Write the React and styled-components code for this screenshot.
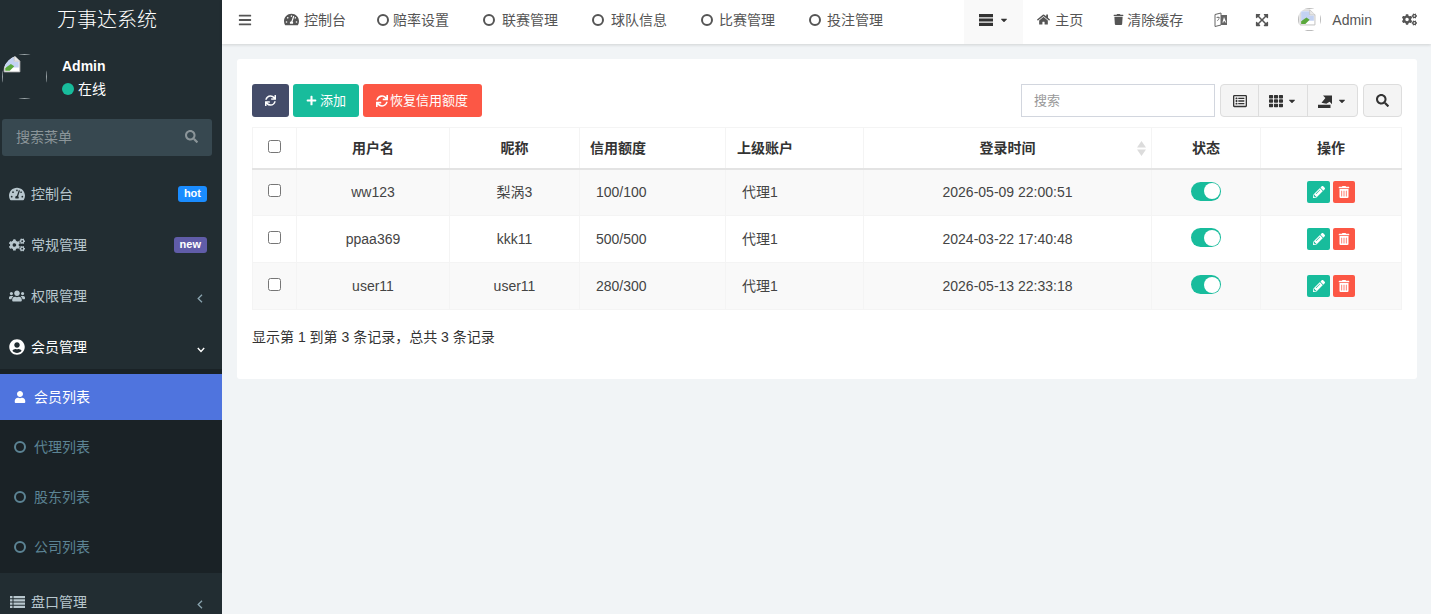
import React from "react";
import styled, { createGlobalStyle } from "styled-components";
import {
  FaTachometerAlt, FaCogs, FaUsers, FaUserCircle, FaUser, FaHome, FaTrash, FaBars,
  FaExpandArrowsAlt, FaSearch, FaSync, FaPlus, FaTh, FaRegListAlt, FaPencilAlt,
  FaCaretDown, FaTrashAlt,
} from "react-icons/fa";

const Global = createGlobalStyle`
  html, body { margin: 0; padding: 0; height: 100%; overflow: hidden; }
  body { font-family: "Liberation Sans", "Noto Sans CJK SC", sans-serif; font-size: 14px; line-height: 20px; color: #333; background: #f1f4f6; }
  * { box-sizing: border-box; }
`;

const Shell = styled.div`display: flex; height: 614px; overflow: hidden;`;
const Side = styled.aside`width: 222px; flex: none; background: #222d32; color: #b8c7ce; overflow: hidden; height: 614px;`;
const Logo = styled.div`height: 44px; display: flex; align-items: center; justify-content: center; padding: 0 8px 4px 0; color: #fff; font-size: 20px; font-weight: 300;`;
const UserPanel = styled.div`display: flex; align-items: flex-start; gap: 15px; padding: 10px 2px 0; height: 75px;`;
const AvatarFrame = styled.div`width: ${p => p.$size}px; height: ${p => p.$size}px; flex: none; border-radius: 50%; overflow: hidden; position: relative;`;
const AvatarOutline = styled.span`position: absolute; inset: 0; border: 1px solid ${p => p.$line};`;
const AvatarImage = styled.span`position: absolute; left: ${p => p.$x}px; top: ${p => p.$y}px;`;
const UserText = styled.div`padding-top: 2px; color: #fff; font-size: 14px;`;
const UserName = styled.div`font-weight: 700; line-height: 20px;`;
const Online = styled.div`display: flex; align-items: center; gap: 4px; line-height: 20px; margin-top: 3px;`;
const Dot = styled.span`width: 12px; height: 12px; border-radius: 50%; background: #18bc9c;`;
const SideSearch = styled.div`margin: 0 10px 0 2px; height: 37px; border-radius: 3px; background: #374850; display: flex; align-items: center; justify-content: space-between; padding: 0 14px 2px; color: #8b9599; font-size: 14px;`;
const Menu = styled.nav`margin-top: 9px;`;
const Item = styled.div`height: 51px; padding: 19px 15px 0 9px; display: flex; align-items: flex-start; color: ${p => p.$open ? "#fff" : "#b8c7ce"}; font-size: 14px; line-height: 20px;`;
const ItemIcon = styled.span`width: 16px; margin-right: 6px; display: flex; justify-content: center; align-items: center; height: 20px; font-size: 16px;`;
const ItemLabel = styled.span`flex: 1;`;
const Badge = styled.span`height: 16px; line-height: 15px; margin-top: 2px; padding: 0 6px; border-radius: 3px; background: ${p => p.$bg}; color: #fff; font-size: 11px; font-weight: 700;`;
const Chevron = styled.svg`margin: ${p => p.$down ? "10px 2px 0 0" : "8px 4px 0 0"}; flex: none;`;
const Sub = styled.div`background: #1a2226; padding: 3px 0 1px;`;
const SubItem = styled.div`height: ${p => p.$active ? 46 : 50}px; margin: ${p => p.$active ? "2px 0" : 0}; display: flex; align-items: center; padding-left: 14px; gap: 8px; background: ${p => p.$active ? "#4f74de" : "transparent"}; color: ${p => p.$active ? "#fff" : "#5c8494"}; font-size: 14px;`;
const SubIcon = styled.span`width: 12px; display: flex; justify-content: center; font-size: 12px;`;
const CircleO = styled.span`width: 12px; height: 12px; flex: none; border-radius: 50%; border: 2px solid ${p => p.$color};`;

const Main = styled.main`flex: 1; min-width: 0; background: #f1f4f6;`;
const Nav = styled.header`height: 44px; background: #fff; box-shadow: 0 1px 3px rgba(0,0,0,.14); display: flex; align-items: center; color: #555; position: relative;`;
const NavLeft = styled.div`display: flex; align-items: center; flex: 1; padding-left: 16px;`;
const NavRight = styled.div`display: flex; align-items: center; height: 44px;`;
const NavItem = styled.span`display: flex; align-items: center; gap: ${p => p.$gap ?? 5}px; margin: 0 ${p => p.$right ?? 0}px 5px ${p => p.$left ?? 0}px; font-size: 14px; color: #555; white-space: nowrap;`;
const NavDrop = styled.div`height: 44px; width: 59px; background: #f9f9f9; display: flex; align-items: center; gap: 6px; padding: 0 0 5px 15px; color: #333; margin-right: 14px;`;

const Content = styled.div`padding: 15px 14px 15px 15px;`;
const Panel = styled.section`height: 320px; background: #fff; border-radius: 3px; padding: 25px 15px 0;`;
const Toolbar = styled.div`display: flex; align-items: center; height: 33px; margin-bottom: 10px;`;
const Btn = styled.span`height: 33px; padding: 0 ${p => p.$padRight ?? 13}px 0 13px; display: inline-flex; align-items: center; justify-content: center; gap: ${p => p.$gap ?? 3}px; border-radius: 3px; background: ${p => p.$bg}; color: #fff; font-size: 13px; margin-right: 4px; white-space: nowrap;`;
const Spacer = styled.div`flex: 1;`;
const SearchInput = styled.div`width: 194px; height: 33px; border: 1px solid #d2d6de; padding: 0 12px; display: flex; align-items: center; color: #999; font-size: 13px; margin-right: 5px;`;
const Group = styled.div`display: flex; height: 33px; border: 1px solid #ddd; border-radius: 4px; background: #f4f4f4; overflow: hidden;`;
const GroupBtn = styled.span`width: ${p => p.$w}px; display: flex; align-items: center; justify-content: center; gap: 4px; color: #333; font-size: 14px; border-left: ${p => p.$first ? 0 : "1px solid #ddd"};`;
const SearchBtn = styled.span`width: 39px; height: 33px; margin-left: 5px; border: 1px solid #ddd; border-radius: 4px; background: #f4f4f4; display: flex; align-items: center; justify-content: center; color: #333; font-size: 13px;`;

const Table = styled.table`width: 1149px; table-layout: fixed; border-collapse: collapse; border: 1px solid #f4f4f4; font-size: 14px; color: #444;`;
const Th = styled.th`height: 41px; border: 1px solid #f4f4f4; border-bottom: 2px solid #e3e3e3; font-weight: 700; color: #333; padding: 0 0 0 ${p => p.$left ?? 0}px; text-align: ${p => p.$left ? "left" : "center"}; position: relative;`;
const Td = styled.td`height: 47px; padding: 0 0 0 ${p => p.$left ?? 0}px; border: 1px solid #f4f4f4; text-align: ${p => p.$left ? "left" : "center"}; background: ${p => p.$odd ? "#f9f9f9" : "#fff"};`;
const Check = styled.input.attrs({ type: "checkbox" })`width: 13px; height: 13px; margin: 0; vertical-align: middle; position: relative; top: -3px;`;
const Sort = styled.svg`position: absolute; right: 5px; top: 13px;`;
const Toggle = styled.span`display: inline-flex; width: 30px; height: 19px; border-radius: 10px; background: #18bc9c; align-items: center; justify-content: flex-end; padding-right: 1px; vertical-align: middle; position: relative; top: -2px;`;
const Knob = styled.span`width: 16px; height: 16px; border-radius: 50%; background: #fff;`;
const Actions = styled.div`display: flex; justify-content: center; gap: 3px;`;
const ActionBtn = styled.span`width: ${p => p.$w}px; height: 22px; border-radius: 2px; background: ${p => p.$bg}; color: #fff; display: flex; align-items: center; justify-content: center; font-size: 12px;`;
const Summary = styled.div`margin-top: 17px; color: #333; font-size: 14px;`;

const BrokenImage = ({ size = 18 }) => (
  <svg width={size} height={size} viewBox="0 0 16 16" style={{ display: "block" }}>
    <path d="M1 1h9.5L15 5.5V15H1z" fill="#fff" stroke="#b8b8b8" strokeWidth=".8" />
    <path d="M2 2h8v4h4v5H2z" fill="#c3d2f2" />
    <path d="M2 14v-2.5L7 8l3 2-4 4z" fill="#5aa83c" />
    <path d="M10 1v4.5h5" fill="#e8e8e8" stroke="#b8b8b8" strokeWidth=".6" />
  </svg>
);

const Translate = () => (
  <svg width="14" height="15" viewBox="0 0 14 15">
    <path d="M1 2.5 7 1v12L1 14.5z" fill="#fff" stroke="#666" strokeWidth="1" />
    <path d="M7 3h6v10H7z" fill="#666" />
    <path d="M10 5l-1.6 5.5h1l.3-1.2h1.3l.3 1.2h1z" fill="#fff" />
    <path d="M2.5 5.5h3M4 4.5v1M3 8.5c1 .2 2-1 2.2-3" fill="none" stroke="#666" strokeWidth=".8" />
  </svg>
);
const ExportIcon = () => (
  <svg width="15" height="15" viewBox="0 0 15 15">
    <path d="M0 11.8h12.5V15H0z" fill="#333" />
    <path d="M3.5 9.8 7.4 5 5 2.4h9v8.8l-2.4-2.5-3.3 2.1z" fill="#333" />
  </svg>
);
const ListBars = ({ color = "currentColor" }) => (
  <svg width="14" height="12" viewBox="0 0 14 12">
    <path d="M0 0h14v3.2H0zM0 4.4h14v3.2H0zM0 8.8h14V12H0z" fill={color} />
  </svg>
);
const ListLines = () => (
  <svg width="15" height="12" viewBox="0 0 15 12">
    <path d="M0 0h2.5v2.2H0zM0 3.3h2.5v2.2H0zM0 6.6h2.5v2.2H0zM0 9.8h2.5V12H0zM3.5 0H15v2.2H3.5zM3.5 3.3H15v2.2H3.5zM3.5 6.6H15v2.2H3.5zM3.5 9.8H15V12H3.5z" fill="currentColor" />
  </svg>
);
const AngleLeft = () => (
  <Chevron width="6" height="9" viewBox="0 0 6 9">
    <path d="M5 .8 1.2 4.5 5 8.2" fill="none" stroke="#8aa4af" strokeWidth="1.3" />
  </Chevron>
);
const AngleDown = () => (
  <Chevron $down width="8" height="6" viewBox="0 0 8 6">
    <path d="M.8 1 4 4.4 7.2 1" fill="none" stroke="#fff" strokeWidth="1.4" />
  </Chevron>
);

const mainMenu = [
  { icon: <FaTachometerAlt />, label: "控制台", badge: ["hot", "#1a8cff"] },
  { icon: <FaCogs />, label: "常规管理", badge: ["new", "#605ca8"] },
  { icon: <FaUsers />, label: "权限管理", chevron: true },
  { icon: <FaUserCircle />, label: "会员管理", open: true },
];
const subMenu = ["代理列表", "股东列表", "公司列表"];
const topMenu = [
  { label: "赔率设置", left: 31, gap: 4 },
  { label: "联赛管理", left: 34, gap: 7 },
  { label: "球队信息", left: 34, gap: 7 },
  { label: "比赛管理", left: 34, gap: 6 },
  { label: "投注管理", left: 34, gap: 6 },
];
const columns = [
  { w: 44 }, { w: 153, t: "用户名" }, { w: 130, t: "昵称" }, { w: 146, t: "信用额度", left: 10 },
  { w: 138, t: "上级账户", left: 11 }, { w: 288, t: "登录时间", sort: true }, { w: 109, t: "状态" }, { w: 141, t: "操作" },
];
const rows = [
  ["ww123", "梨涡3", "100/100", "代理1", "2026-05-09 22:00:51"],
  ["ppaa369", "kkk11", "500/500", "代理1", "2024-03-22 17:40:48"],
  ["user11", "user11", "280/300", "代理1", "2026-05-13 22:33:18"],
];

export default function App() {
  return (
    <Shell>
      <Global />
      <Side>
        <Logo>万事达系统</Logo>
        <UserPanel>
          <AvatarFrame $size={45}>
            <AvatarOutline $line="#9aa3a7" />
            <AvatarImage $x={1} $y={1}><BrokenImage size={18} /></AvatarImage>
          </AvatarFrame>
          <UserText>
            <UserName>Admin</UserName>
            <Online><Dot />在线</Online>
          </UserText>
        </UserPanel>
        <SideSearch>搜索菜单<FaSearch size={13} /></SideSearch>
        <Menu>
          {mainMenu.map(m => (
            <Item key={m.label} $open={m.open}>
              <ItemIcon>{m.icon}</ItemIcon>
              <ItemLabel>{m.label}</ItemLabel>
              {m.badge && <Badge $bg={m.badge[1]}>{m.badge[0]}</Badge>}
              {m.chevron && <AngleLeft />}
              {m.open && <AngleDown />}
            </Item>
          ))}
          <Sub>
            <SubItem $active><SubIcon><FaUser /></SubIcon>会员列表</SubItem>
            {subMenu.map(s => <SubItem key={s}><CircleO $color="#5c8494" />{s}</SubItem>)}
          </Sub>
          <Item>
            <ItemIcon><ListLines /></ItemIcon>
            <ItemLabel>盘口管理</ItemLabel>
            <AngleLeft />
          </Item>
        </Menu>
      </Side>
      <Main>
        <Nav>
          <NavLeft>
            <NavItem><FaBars size={14} /></NavItem>
            <NavItem $left={32}><FaTachometerAlt size={15} />控制台</NavItem>
            {topMenu.map(t => (
              <NavItem key={t.label} $left={t.left} $gap={t.gap}><CircleO $color="#555" />{t.label}</NavItem>
            ))}
          </NavLeft>
          <NavRight>
            <NavDrop><ListBars color="#333" /><FaCaretDown size={10} /></NavDrop>
            <NavItem><FaHome size={13} />主页</NavItem>
            <NavItem $left={30} $gap={3}><FaTrash size={11} />清除缓存</NavItem>
            <NavItem $left={31}><Translate /></NavItem>
            <NavItem $left={27}><FaExpandArrowsAlt size={14} /></NavItem>
            <NavItem $left={29} $gap={11}>
              <AvatarFrame $size={23}>
                <AvatarOutline $line="#bbb" />
                <AvatarImage $x={1} $y={1}><BrokenImage size={17} /></AvatarImage>
              </AvatarFrame>
              Admin
            </NavItem>
            <NavItem $left={30} $right={14}><FaCogs size={15} /></NavItem>
          </NavRight>
        </Nav>
        <Content>
          <Panel>
            <Toolbar>
              <Btn $bg="#444c69"><FaSync size={11} /></Btn>
              <Btn $bg="#18bc9c"><FaPlus size={11} />添加</Btn>
              <Btn $bg="#fc5745" $gap={2} $padRight={14}><FaSync size={12} />恢复信用额度</Btn>
              <Spacer />
              <SearchInput>搜索</SearchInput>
              <Group>
                <GroupBtn $w={37} $first><FaRegListAlt size={14} /></GroupBtn>
                <GroupBtn $w={49}><FaTh size={14} /><FaCaretDown size={10} /></GroupBtn>
                <GroupBtn $w={50}><ExportIcon /><FaCaretDown size={10} /></GroupBtn>
              </Group>
              <SearchBtn><FaSearch /></SearchBtn>
            </Toolbar>
            <Table>
              <colgroup>{columns.map((c, i) => <col key={i} style={{ width: c.w }} />)}</colgroup>
              <thead>
                <tr>
                  {columns.map((c, i) => (
                    <Th key={i} $left={c.left}>
                      {i === 0 ? <Check /> : c.t}
                      {c.sort && (
                        <Sort width="9" height="15" viewBox="0 0 9 15">
                          <path d="M4.5 0 9 6.5H0zM4.5 15 0 8.5h9z" fill="#dcdcdc" />
                        </Sort>
                      )}
                    </Th>
                  ))}
                </tr>
              </thead>
              <tbody>
                {rows.map((r, i) => {
                  const odd = i % 2 === 0;
                  return (
                    <tr key={r[0]}>
                      <Td $odd={odd}><Check /></Td>
                      <Td $odd={odd}>{r[0]}</Td>
                      <Td $odd={odd}>{r[1]}</Td>
                      <Td $odd={odd} $left={16}>{r[2]}</Td>
                      <Td $odd={odd} $left={16}>{r[3]}</Td>
                      <Td $odd={odd}>{r[4]}</Td>
                      <Td $odd={odd}><Toggle><Knob /></Toggle></Td>
                      <Td $odd={odd}>
                        <Actions>
                          <ActionBtn $w={23} $bg="#18bc9c"><FaPencilAlt /></ActionBtn>
                          <ActionBtn $w={22} $bg="#fc5745"><FaTrashAlt /></ActionBtn>
                        </Actions>
                      </Td>
                    </tr>
                  );
                })}
              </tbody>
            </Table>
            <Summary>显示第 1 到第 3 条记录，总共 3 条记录</Summary>
          </Panel>
        </Content>
      </Main>
    </Shell>
  );
}
